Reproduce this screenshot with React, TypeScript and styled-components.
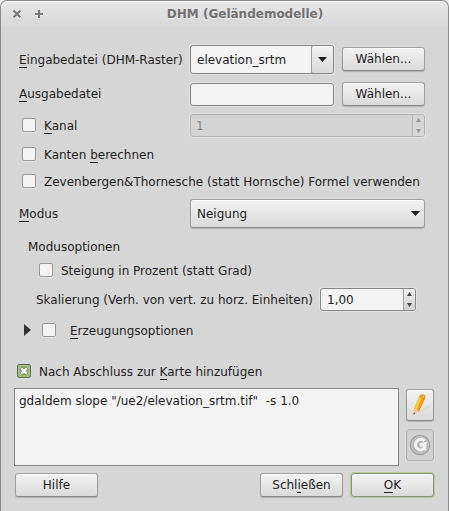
import React from 'react';
import styled, { createGlobalStyle, css } from 'styled-components';

const GlobalStyle = createGlobalStyle`
  * { box-sizing: border-box; }
  body {
    margin: 0;
    background: #ececec;
    font: 12px/16px "DejaVu Sans", Verdana, sans-serif;
    color: #1e1e1e;
    overflow: hidden;
  }
`;

const Dialog = styled.div`
  width: 449px;
  height: 511px;
  border: 1px solid #8b8b8b;
  border-bottom: 0;
  border-radius: 7px 7px 0 0;
  background: linear-gradient(#e7e7e7 0, #d6d6d6 27px);
  box-shadow: inset 0 1px #f8f8f8;
`;

const TitleBar = styled.header`
  display: grid;
  grid-template-columns: 52px 1fr 22px;
  align-items: center;
  height: 25px;
  padding-left: 11px;
  color: #707070;
  text-shadow: 0 1px #f2f2f2;
`;

const WindowControls = styled.div`
  display: flex;
  gap: 12px;
  svg { display: block; filter: drop-shadow(0 1px #f4f4f4); }
`;

const Title = styled.h1`
  margin: 0;
  font-size: 12px;
  line-height: 16px;
  text-align: center;
`;

const Row = styled.div<{ $h: number; $x?: number; $top?: number }>`
  display: flex;
  align-items: center;
  height: ${p => p.$h}px;
  margin-top: ${p => p.$top ?? 0}px;
  padding-left: ${p => p.$x ?? 18}px;
`;

const Label = styled.span<{ $w?: number; $low?: boolean }>`
  flex: none;
  white-space: pre;
  ${p => p.$w && css`width: ${p.$w}px;`}
  ${p => p.$low && css`padding-top: 2px;`}
`;

const Key = styled.span`
  box-shadow: 0 -1px #1e1e1e inset;
  padding-bottom: 1px;
`;

const Field = styled.div<{ $w: number; $h: number; $disabled?: boolean }>`
  display: flex;
  align-items: center;
  flex: none;
  overflow: hidden;
  width: ${p => p.$w}px;
  height: ${p => p.$h}px;
  padding-left: ${p => (p.$disabled ? 5 : 6)}px;
  border: 1px solid ${p => (p.$disabled ? '#b2b2b2' : '#858585')};
  border-radius: 3px;
  background: ${p => (p.$disabled ? '#d4d4d4' : '#f3f3f3')};
  color: ${p => (p.$disabled ? '#858585' : '#1e1e1e')};
  box-shadow: 0 0 0 1px #e2e2e2;
`;

const raised = css`
  border: 1px solid #a0a0a0;
  border-bottom-color: #8a8a8a;
  border-radius: 3px;
  background: linear-gradient(#f2f2f2, #dadada);
  box-shadow: inset 0 1px #fafafa, 0 1px 1px #b0b0b0;
`;

const ComboButton = styled.div`
  ${raised}
  display: grid;
  place-items: center;
  width: 23px;
  height: 29px;
  margin: -1px -1px -1px auto;
`;

const Combo = styled.div`
  ${raised}
  display: flex;
  align-items: center;
  justify-content: space-between;
  width: 235px;
  height: 29px;
  padding: 0 4px 0 6px;
`;

const Stepper = styled.div<{ $disabled?: boolean }>`
  display: flex;
  flex-direction: column;
  align-items: center;
  justify-content: space-between;
  align-self: stretch;
  width: 12px;
  margin-left: auto;
  padding: 3px 0;
  border-left: 1px solid ${p => (p.$disabled ? '#b8b8b8' : '#a0a0a0')};
  background: ${p => (p.$disabled ? '#d6d6d6' : 'linear-gradient(#eee, #cfcfcf)')};
`;

const Button = styled.button<{ $primary?: boolean; $gap?: number; $raise?: boolean }>`
  ${raised}
  flex: none;
  width: 83px;
  height: 24px;
  margin: 0 0 ${p => (p.$raise ? 1 : 0)}px ${p => p.$gap ?? 0}px;
  padding: 0;
  font: inherit;
  color: #1e1e1e;
  ${p => p.$primary && css`
    border-color: #8b917f;
    box-shadow: inset 0 1px #fafafa, 0 0 0 1px #b0c998;
  `}
`;

const ToolButton = styled.button<{ $off?: boolean }>`
  ${raised}
  display: grid;
  place-items: center;
  width: 28px;
  height: 32px;
  padding: 0;
  ${p => p.$off && css`
    border-color: #aeaeae;
    background: #d1d1d1;
    box-shadow: 0 0 0 1px #dedede;
  `}
`;

const Box = styled.span<{ $checked?: boolean; $gap?: number }>`
  display: grid;
  place-items: center;
  flex: none;
  width: 14px;
  height: 14px;
  margin-right: ${p => p.$gap ?? 8}px;
  border: 1px solid ${p => (p.$checked ? '#646b59' : '#989898')};
  border-radius: 2px;
  background: ${p => (p.$checked ? '#a2c180' : '#f3f3f3')};
  box-shadow: 0 1px #e5e5e5;
`;

const Expander = styled.span`
  display: flex;
  width: 19px;
`;

const CommandArea = styled.section`
  display: flex;
  gap: 7px;
  margin: 3px 0 0 13px;
`;

const Command = styled.div`
  width: 385px;
  height: 78px;
  padding: 4px;
  border: 1px solid #858585;
  background: #f3f3f3;
  white-space: pre;
`;

const Tools = styled.div`
  display: flex;
  flex-direction: column;
  gap: 8px;
  padding-top: 1px;
`;

const Footer = styled.footer`
  display: flex;
  margin: 7px 14px 0 14px;
`;

const Arrow = ({ w = 9, h = 5, up = false, color = '#1e1e1e' }) => (
  <svg width={w} height={h} viewBox="0 0 10 6" preserveAspectRatio="none">
    <path d={up ? 'M0 6L5 0l5 6z' : 'M0 0h10L5 6z'} fill={color} />
  </svg>
);

const Steps = ({ disabled = false }) => (
  <Stepper $disabled={disabled}>
    <Arrow w={5} h={4} up color={disabled ? '#999' : '#444'} />
    <Arrow w={5} h={4} color={disabled ? '#999' : '#444'} />
  </Stepper>
);

const Pencil = () => (
  <svg width="24" height="24" viewBox="0 0 24 24">
    <g transform="translate(-1.8 -1.8) scale(1.07)">
      <path d="M8 21.5L20 13.5l3 1.5-10 5z" fill="#c9c9d8" opacity=".4" />
      <path d="M12.6 4.2l4.8 1.6-5.4 12.6-4.8 2.2.2-4.6z" fill="#f9a010" />
      <path d="M12.9 4.5l2.1.8-5.2 12-2-.8z" fill="#ffd23a" />
      <path d="M12.4 4.4q1.6-2 4.8-.8 1.2.8.4 2.4l-.6 1.2-4.8-1.8z" fill="#f3a53a" stroke="#c98024" strokeWidth=".4" />
      <path d="M7.2 16.2l4.2 2-4.4 3.6z" fill="#edc796" />
      <path d="M7.1 19.8l1.4.8-1.7 1.6z" fill="#594130" />
      <path d="M17.2 6.8l-5.6 11.4" stroke="#d8701a" strokeWidth=".7" />
    </g>
  </svg>
);

const GrassLogo = () => (
  <svg width="22" height="22" viewBox="0 0 22 22">
    <circle cx="11" cy="11" r="9.7" fill="#b5b5b5" stroke="#9b9b9b" strokeWidth="1.1" />
    <circle cx="11" cy="11" r="8.4" fill="none" stroke="#c9c9c9" />
    <path d="M15.5 6.9A5.3 5.3 0 1 0 12.5 15.9L15 14" fill="none" stroke="#f2f2f2" strokeWidth="3" />
    <path d="M10 9.6l7.8-2-.8 8.6h-3v-4.2l-2.4 1.2z" fill="#f2f2f2" />
  </svg>
);

export default function App() {
  return (
    <>
      <GlobalStyle />
      <Dialog>
        <TitleBar>
          <WindowControls>
            <svg width="10" height="10" viewBox="0 0 10 10">
              <path d="M1.5 1.5l7 7m0-7l-7 7" stroke="#777" strokeWidth="2" />
            </svg>
            <svg width="10" height="10" viewBox="0 0 10 10">
              <path d="M5 1v8M1 5h8" stroke="#777" strokeWidth="2" />
            </svg>
          </WindowControls>
          <Title>DHM (Geländemodelle)</Title>
        </TitleBar>
        <Row $h={39} $top={14}>
          <Label $w={171}><Key>E</Key>ingabedatei (DHM-Raster)</Label>
          <Field $w={144} $h={29}>elevation_srtm<ComboButton><Arrow /></ComboButton></Field>
          <Button $gap={8} $raise>Wählen...</Button>
        </Row>
        <Row $h={30}>
          <Label $w={171}><Key>A</Key>usgabedatei</Label>
          <Field $w={144} $h={23} />
          <Button $gap={8}>Wählen...</Button>
        </Row>
        <Row $h={32} $x={21}>
          <Box /><Label $w={146} $low><Key>K</Key>anal</Label>
          <Field $w={235} $h={23} $disabled><Label $low>1</Label><Steps disabled /></Field>
        </Row>
        <Row $h={26} $x={21}><Box /><Label $low>Kanten <Key>b</Key>erechnen</Label></Row>
        <Row $h={28} $x={21}><Box /><Label $low>Zevenbergen&amp;Thornesche (statt Hornsche) Formel verwenden</Label></Row>
        <Row $h={37}>
          <Label $w={171}><Key>M</Key>odus</Label>
          <Combo>Neigung<Arrow /></Combo>
        </Row>
        <Row $h={30} $x={27}><Label>Modusoptionen</Label></Row>
        <Row $h={16} $x={38}><Box /><Label $low>Steigung in Prozent (statt Grad)</Label></Row>
        <Row $h={43} $x={35}>
          <Label $w={284}>Skalierung (Verh. von vert. zu horz. Einheiten)</Label>
          <Field $w={96} $h={23}>1,00<Steps /></Field>
        </Row>
        <Row $h={18} $x={22}>
          <Expander>
            <svg width="9" height="12" viewBox="0 0 9 12"><path d="M1 0l7 6-7 6z" fill="#333" /></svg>
          </Expander>
          <Box $gap={14} /><Label $low><Key>E</Key>rzeugungsoptionen</Label>
        </Row>
        <Row $h={28} $x={16} $top={18}>
          <Box $checked>
            <svg width="10" height="10" viewBox="0 0 10 10">
              <path d="M2 2l6 6m0-6L2 8" stroke="#65764d" strokeWidth="4.2" />
              <path d="M2.3 2.3l5.4 5.4m0-5.4L2.3 7.7" stroke="#fff" strokeWidth="2.5" />
            </svg>
          </Box>
          <Label $low>Nach Abschluss zur <Key>K</Key>arte hinzufügen</Label>
        </Row>
        <CommandArea>
          <Command>{'gdaldem slope "/ue2/elevation_srtm.tif"  -s 1.0'}</Command>
          <Tools>
            <ToolButton><Pencil /></ToolButton>
            <ToolButton $off><GrassLogo /></ToolButton>
          </Tools>
        </CommandArea>
        <Footer>
          <Button>Hilfe</Button>
          <Button $gap={162}>Schl<Key>i</Key>eßen</Button>
          <Button $gap={8} $primary><Key>O</Key>K</Button>
        </Footer>
      </Dialog>
    </>
  );
}
